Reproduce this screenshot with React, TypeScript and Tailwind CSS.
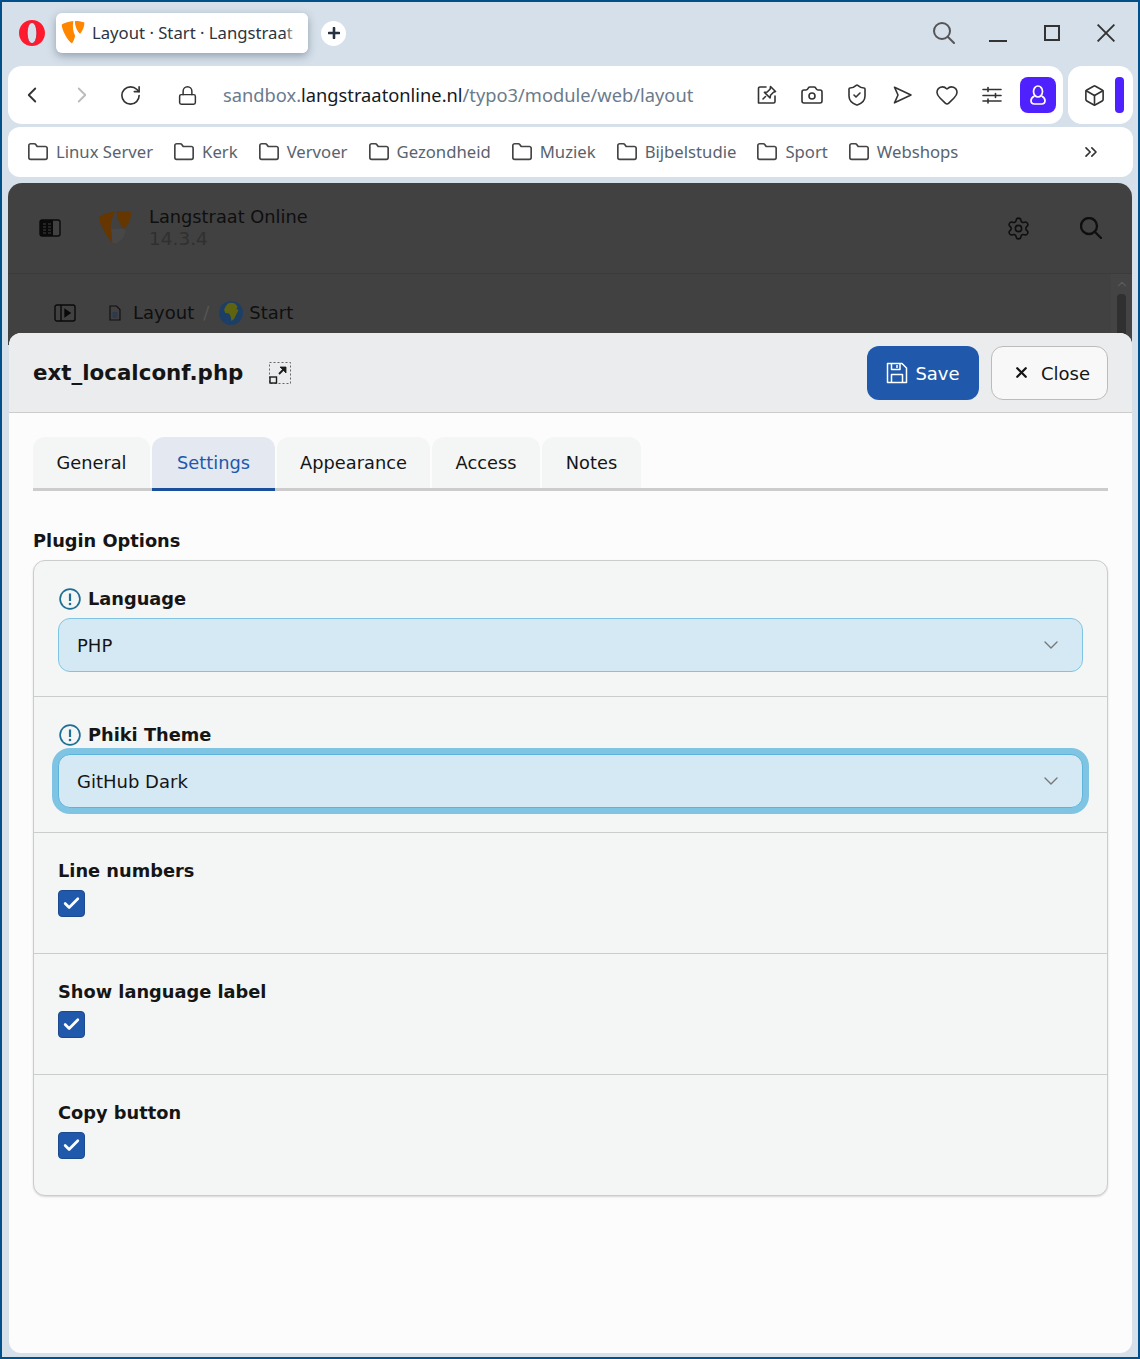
import React from "react";
import {
  Box,
  Camera,
  ChevronLeft,
  ChevronRight,
  ChevronUp,
  ChevronsRight,
  ChevronDown,
  Check,
  Folder,
  Heart,
  Lock,
  RotateCw,
  Settings,
  ShieldCheck,
  X,
} from "lucide-react";

const chrome = "font-['Noto_Sans',sans-serif]";
const content = "font-['DejaVu_Sans',sans-serif]";

const Typo3Logo = ({ className, fill }: { className: string; fill: string }) => (
  <svg viewBox="0 0 34 34" className={className} fill={fill}>
    <path d="M1 5C5 2.500 12 .500 17.500 0 16 8 17 15 20 21 19 26 17 30 15.500 32 9 27 1 13 1 5Z" />
    <path d="M20 0C25 0 31 1 33 2 33.500 6 31 13 27 18 23 15 19 6 20 0Z" />
  </svg>
);

// the logo in the dimmed backend header, with its faint lower patch
const DimmedLogo = () => (
  <svg viewBox="0 0 34 34" className="ml-[37px] h-[34px] w-[34px]">
    <path d="M13 18h13l2 2-3 7-6 5h-5z" fill="#474747" />
    <path d="M1 6C5 3 11 1 17 .5 14 7 12 13 13 19 13.500 24 14 28 14.500 32 9 26 1 13 1 6Z" fill="#663600" />
    <path d="M19 0C24-.2 30 .5 33 1.500 33.500 6 31 13 26 18 22 14 18.500 6 19 0Z" fill="#663600" />
  </svg>
);

const OperaLogo = () => (
  <svg viewBox="0 0 26 26" className="h-[26px] w-[26px]">
    <path
      fillRule="evenodd"
      fill="#ff1b2d"
      d="M13 0C20.500 0 26 5.800 26 13S20.500 26 13 26 0 20.200 0 13 5.500 0 13 0ZM13 2.500C10 2.500 8.200 7 8.200 13S10 23.500 13 23.500 17.800 19 17.800 13 16 2.500 13 2.500Z"
    />
    <ellipse cx="13" cy="13" rx="4.900" ry="10.600" fill="none" stroke="#c8102e" strokeWidth="0.800" />
  </svg>
);

const SearchGlyph = ({ stroke, width }: { stroke: string; width: number }) => (
  <svg viewBox="0 0 22 22" className="h-[22px] w-[22px]" fill="none" stroke={stroke} strokeWidth={width} strokeLinecap="round">
    <circle cx="9" cy="9" r="8" />
    <path d="M15 15l6 6" />
  </svg>
);

const PinIcon = () => (
  <svg viewBox="0 0 24 24" className="h-[24px] w-[24px]" fill="none" stroke="#333" strokeWidth="1.6" strokeLinejoin="round" strokeLinecap="round">
    <path d="M11 4H5a1.500 1.500 0 0 0-1.500 1.500V20h15a1.500 1.500 0 0 0 1.500-1.500V13" />
    <path d="M15.500 3.500l5 5-2 .8-3 3-.4 2.700-5.600-5.600 2.700-.4 3-3zM10.500 13.500L8 16" />
  </svg>
);

const SendIcon = () => (
  <svg viewBox="0 0 24 24" className="h-[24px] w-[24px]" fill="none" stroke="#333" strokeWidth="1.6" strokeLinejoin="round">
    <path d="M4.500 4.200L21 12 4.500 19.800 8 12z" />
  </svg>
);

const EasyIcon = () => (
  <svg viewBox="0 0 24 24" className="h-[24px] w-[24px]" fill="none" stroke="#333" strokeWidth="1.6" strokeLinecap="round">
    <path d="M3 6.500h18M3 12.500h18M3 18h18" />
    <path d="M8 4.500v4M15.500 10.500v4M8 16v4" />
  </svg>
);

const SidebarIcon = () => (
  <svg viewBox="0 0 22 18" className="h-[18px] w-[22px]">
    <rect x="1" y="1" width="20" height="16" rx="2" fill="none" stroke="#0a0a0a" strokeWidth="1.4" />
    <path d="M2 1h12v16H2a1 1 0 0 1-1-1V2a1 1 0 0 1 1-1z" fill="#0a0a0a" />
    <path d="M4 5h3M9 5h3M4 8h3M9 8h3M4 11h3M9 11h3M4 14h3M9 14h3" stroke="#414141" strokeWidth="1" />
  </svg>
);

const PanelPlayIcon = () => (
  <svg viewBox="0 0 22 18" className="h-[18px] w-[22px]" fill="none" stroke="#0a0a0a" strokeWidth="1.4">
    <rect x="1" y="1" width="20" height="16" rx="2" />
    <path d="M7 1v16" />
    <path d="M11 5.500v7l5-3.500z" fill="#0a0a0a" />
  </svg>
);

const PageIcon = () => (
  <svg viewBox="0 0 14 16" className="h-[16px] w-[14px]" fill="none" stroke="#111" strokeWidth="1.2">
    <path d="M2 1h6.500L12 4.500V15H2z" />
    <path d="M4.500 8h5M4.500 10h5M4.500 12h5" stroke="#1d3557" />
  </svg>
);

const GlobeIcon = () => (
  <svg viewBox="0 0 24 24" className="h-[24px] w-[24px]">
    <circle cx="12" cy="12" r="12" fill="#1d3f66" />
    <path d="M9 2.500c2-1 5-1 7 0l2.500 3-1 2.500 2 1-2.500 5-2 4-2.500 2-1-5-1.500-2.500-3.500-.5-1.500-3 1.500-3.500z" fill="#5f6410" />
  </svg>
);

const SaveIcon = () => (
  <svg viewBox="0 0 22 22" className="h-[22px] w-[22px]" fill="none" stroke="#fff" strokeWidth="1.5" strokeLinejoin="round">
    <path d="M1.500 1.500h14.500l4.500 4.500v14.500h-19z" />
    <path d="M5.500 1.500v6h8.500v-6M11 3v3" />
    <path d="M5.500 20.500v-8h11v8" />
  </svg>
);

const ExpandIcon = () => (
  <svg viewBox="0 0 22 22" className="h-[22px] w-[22px]" fill="none" stroke="#1b1b1b">
    <rect x="0.500" y="0.500" width="21" height="21" strokeDasharray="2 2" stroke="#666" />
    <rect x="1" y="15" width="6.500" height="6" fill="#eaecee" strokeWidth="1.400" />
    <path d="M10 12l6-6" strokeWidth="1.800" />
    <path d="M11 5h6v6z" fill="#1b1b1b" strokeWidth="0.800" />
  </svg>
);

const InfoIcon = () => (
  <svg viewBox="0 0 22 22" className="ml-[1px] h-[22px] w-[22px] shrink-0" fill="none" stroke="#1f6f94" strokeWidth="1.700">
    <circle cx="11" cy="11" r="9.900" />
    <path d="M11 5.500v7.500" strokeWidth="2.200" />
    <circle cx="11" cy="16" r="1.300" fill="#1f6f94" stroke="none" />
  </svg>
);

const bookmarks = ["Linux Server", "Kerk", "Vervoer", "Gezondheid", "Muziek", "Bijbelstudie", "Sport", "Webshops"];

const tabs = [
  { label: "General", width: "w-[117px]" },
  { label: "Settings", width: "w-[123px]", active: true },
  { label: "Appearance", width: "w-[153px]" },
  { label: "Access", width: "w-[108px]" },
  { label: "Notes", width: "w-[99px]" },
];

const SelectField = ({ label, value, focused }: { label: string; value: string; focused?: boolean }) => (
  <div className="border-b border-[#cccccc] px-6 pt-[25px] pb-6">
    <div className="flex h-[26px] items-center gap-[7px] text-[17.800px] leading-[26px] font-bold text-[#151515]">
      <InfoIcon />
      {label}
    </div>
    <div
      className={`mt-[6px] flex h-[54px] items-center justify-between rounded-xl border bg-[#d5e9f5] pr-[19px] pl-[18px] text-[18px] text-[#151515] ${
        focused ? "border-[#5cb3dc] ring-[6px] ring-[#7fc5e3]" : "border-[#7fc5e3]"
      }`}
    >
      {value}
      <ChevronDown size={24} color="#777" strokeWidth={1.4} />
    </div>
  </div>
);

const CheckField = ({ label, last }: { label: string; last?: boolean }) => (
  <div className={`${last ? "h-[120px]" : "h-[121px] border-b border-[#cccccc]"} px-6 pt-[25px]`}>
    <div className="h-[26px] text-[17.800px] leading-[26px] font-bold text-[#151515]">{label}</div>
    <div className="mt-[6px] flex h-[27px] w-[27px] items-center justify-center rounded-[4px] border border-[#1b4a8e] bg-[#2059ac]">
      <Check size={19} color="#fff" strokeWidth={3.4} />
    </div>
  </div>
);

export default function App() {
  return (
    <div className="flex h-[1359px] w-[1140px] flex-col overflow-hidden border-2 border-[#02508a] bg-[#d6e0ea] pr-[5px] pl-[6px]">
      {/* browser tab strip */}
      <div className={`${chrome} flex h-[62px] shrink-0 items-center pl-[11px]`}>
        <OperaLogo />
        <div className="relative ml-[11px] flex h-[40px] w-[252px] items-center overflow-hidden rounded-[6px] bg-white pl-[5px] shadow-[0_3px_8px_rgba(60,80,100,0.45)]">
          <Typo3Logo className="h-[24px] w-[24px] shrink-0" fill="#ff8700" />
          <span className="ml-[7px] text-[16.700px] whitespace-nowrap text-[#2b3440]">Layout · Start · Langstraat Online</span>
          <div className="absolute inset-y-0 right-0 w-[24px] bg-gradient-to-r from-transparent to-white to-60%" />
        </div>
        <div className="ml-[13px] flex h-[25px] w-[25px] items-center justify-center rounded-full bg-white text-[#26323f]">
          <svg viewBox="0 0 12 12" className="h-[12px] w-[12px]" stroke="currentColor" strokeWidth="2.6" strokeLinecap="round">
            <path d="M6 1v10M1 6h10" />
          </svg>
        </div>
        {/* window controls */}
        <div className="ml-auto flex items-center pr-[18px]">
          <SearchGlyph stroke="#555" width={2} />
          <svg viewBox="0 0 18 18" className="ml-[34px] h-[18px] w-[18px]" stroke="#333" strokeWidth="2">
            <path d="M0 17h18" />
          </svg>
          <svg viewBox="0 0 16 16" className="ml-[37px] h-[16px] w-[16px]" fill="none" stroke="#333" strokeWidth="2">
            <rect x="1" y="1" width="14" height="14" />
          </svg>
          <svg viewBox="0 0 18 18" className="ml-[37px] h-[18px] w-[18px]" stroke="#333" strokeWidth="1.9">
            <path d="M.6.6l16.800 16.800M17.400.6L.6 17.400" />
          </svg>
        </div>
      </div>

      {/* address bar */}
      <div className={`${chrome} mt-[2px] flex h-[58px] shrink-0 gap-[5px]`}>
        <div className="flex w-[1055px] items-center rounded-[14px] bg-white pl-[11px]">
          <ChevronLeft size={26} color="#333" strokeWidth={1.7} />
          <ChevronRight size={26} color="#bbb" strokeWidth={1.7} className="ml-[24px]" />
          <RotateCw size={23} color="#333" strokeWidth={1.7} className="ml-[24px]" />
          <Lock size={21} color="#333" strokeWidth={1.7} className="ml-[35px]" />
          <div className="ml-[25px] text-[18.300px] whitespace-nowrap text-[#6a7b8c]">
            sandbox.<span className="text-[#14191f]">langstraatonline.nl</span>/typo3/module/web/layout
          </div>
          <div className="ml-auto flex items-center gap-[21px] pr-[7px]">
            <PinIcon />
            <Camera size={24} color="#333" strokeWidth={1.6} />
            <ShieldCheck size={24} color="#333" strokeWidth={1.6} />
            <SendIcon />
            <Heart size={24} color="#333" strokeWidth={1.6} />
            <EasyIcon />
            <div className="-ml-[5px] flex h-[36px] w-[36px] items-center justify-center rounded-[8px] bg-[#5021ff]">
              <svg viewBox="0 0 24 24" className="h-[24px] w-[24px]" fill="none" stroke="#fff" strokeWidth="1.700">
                <ellipse cx="12" cy="8.500" rx="4.500" ry="5.500" />
                <path d="M8.500 13c-2 1-3.500 2.500-3.500 4.500 0 2 1.500 3.500 3.500 3.500h7c2 0 3.500-1.500 3.500-3.500 0-2-1.500-3.500-3.500-4.500" />
              </svg>
            </div>
          </div>
        </div>
        <div className="flex w-[65px] items-center rounded-[14px] bg-white pl-[15px]">
          <Box size={23} color="#333" strokeWidth={1.7} />
          <div className="ml-[9px] h-[36px] w-[9px] rounded-[4px] bg-[#5021ff]" />
        </div>
      </div>

      {/* bookmarks */}
      <div className={`${chrome} mt-[3px] flex h-[50px] shrink-0 items-center rounded-[12px] bg-white pr-[32px] pl-[19px] text-[16.700px] text-[#59636e]`}>
        {bookmarks.map((b) => (
          <div key={b} className="mr-[20px] flex items-center gap-[7px]">
            <Folder size={22} color="#444" strokeWidth={1.8} />
            <span>{b}</span>
          </div>
        ))}
        <ChevronsRight size={20} color="#333" strokeWidth={2} className="ml-auto" />
      </div>

      {/* dimmed backend behind the modal */}
      <div className={`${content} mt-[6px] mr-[1px] h-[162px] shrink-0 overflow-hidden rounded-t-[14px] bg-[#414141]`}>
        <div className="flex h-[91px] items-center border-b border-[#3b3b3b] pr-[30px] pl-[31px]">
          <SidebarIcon />
          <DimmedLogo />
          <div className="ml-[17px] text-[#0f0f0f]">
            <div className="text-[17.800px] leading-[22px]">Langstraat Online</div>
            <div className="text-[18.500px] leading-[22px] text-[#303030]">14.3.4</div>
          </div>
          <Settings size={25} color="#0f0f0f" strokeWidth={1.5} className="ml-auto" />
          <div className="ml-[49px]">
            <SearchGlyph stroke="#0f0f0f" width={2.3} />
          </div>
        </div>
        <div className="flex h-[70px] items-start pl-[46px] text-[18px] leading-[24px] text-[#0f0f0f]">
          <div className="mt-[27px] flex h-[24px] items-center">
            <PanelPlayIcon />
            <div className="ml-[32px] flex items-center gap-[11px]">
              <PageIcon />
              <span>Layout</span>
            </div>
            <span className="ml-[9px] text-[#555]">/</span>
            <div className="ml-[10px] flex items-center gap-[6px]">
              <GlobeIcon />
              <span>Start</span>
            </div>
          </div>
          <div className="ml-auto flex h-full w-[21px] flex-col items-center bg-[#444444] pt-[3px]">
            <ChevronUp size={14} color="#5a5a5a" strokeWidth={2} />
            <div className="mt-[3px] h-[50px] w-[9px] rounded-[4px] bg-[#303030]" />
          </div>
        </div>
      </div>

      {/* modal */}
      <div className={`${content} relative -mt-[12px] mr-[1px] mb-[4px] ml-[1px] flex min-h-0 flex-1 flex-col rounded-xl bg-[#fcfcfc]`}>
        <div className="flex h-[80px] shrink-0 items-center rounded-t-xl border-b border-[#cccccc] bg-[#eaecee] px-[24px]">
          <div className="pt-[1px] text-[21.400px] font-bold text-[#151515]">ext_localconf.php</div>
          <div className="ml-[26px]">
            <ExpandIcon />
          </div>
          <button className="ml-auto flex h-[54px] w-[112px] items-center justify-center gap-[7px] rounded-xl bg-[#2059ac] text-[18px] text-white">
            <SaveIcon />
            <span className="pt-[1px]">Save</span>
          </button>
          <button className="ml-[12px] flex h-[54px] w-[117px] items-center justify-center gap-[11px] rounded-xl border border-[#bbbbbb] bg-[#f8f8f8] pl-[4px] text-[18px] text-[#151515]">
            <X size={17} color="#151515" strokeWidth={3.2} />
            <span className="pt-[1px]">Close</span>
          </button>
        </div>

        <div className="px-[24px] pt-[24px]">
          <div className="flex h-[54px] gap-[2px] border-b-[3px] border-[#cccccc]">
            {tabs.map((t) => (
              <div
                key={t.label}
                className={`${t.width} flex items-center justify-center rounded-t-xl pt-[1px] text-[17.800px] ${
                  t.active ? "-mb-[3px] h-[54px] border-b-[3px] border-[#1a4f9c] bg-[#e4e8f0] text-[#2059ac]" : "h-[51px] bg-[#f4f6f6] text-[#151515]"
                }`}
              >
                {t.label}
              </div>
            ))}
          </div>

          <div className="mt-[37px] h-[26px] text-[17.800px] leading-[26px] font-bold text-[#151515]">Plugin Options</div>
          <div className="mt-[6px] rounded-xl border border-[#cccccc] bg-[#f4f6f6] shadow-[0_1px_2px_rgba(0,0,0,0.15)]">
            <SelectField label="Language" value="PHP" />
            <SelectField label="Phiki Theme" value="GitHub Dark" focused />
            <CheckField label="Line numbers" />
            <CheckField label="Show language label" />
            <CheckField label="Copy button" last />
          </div>
        </div>
      </div>
    </div>
  );
}
